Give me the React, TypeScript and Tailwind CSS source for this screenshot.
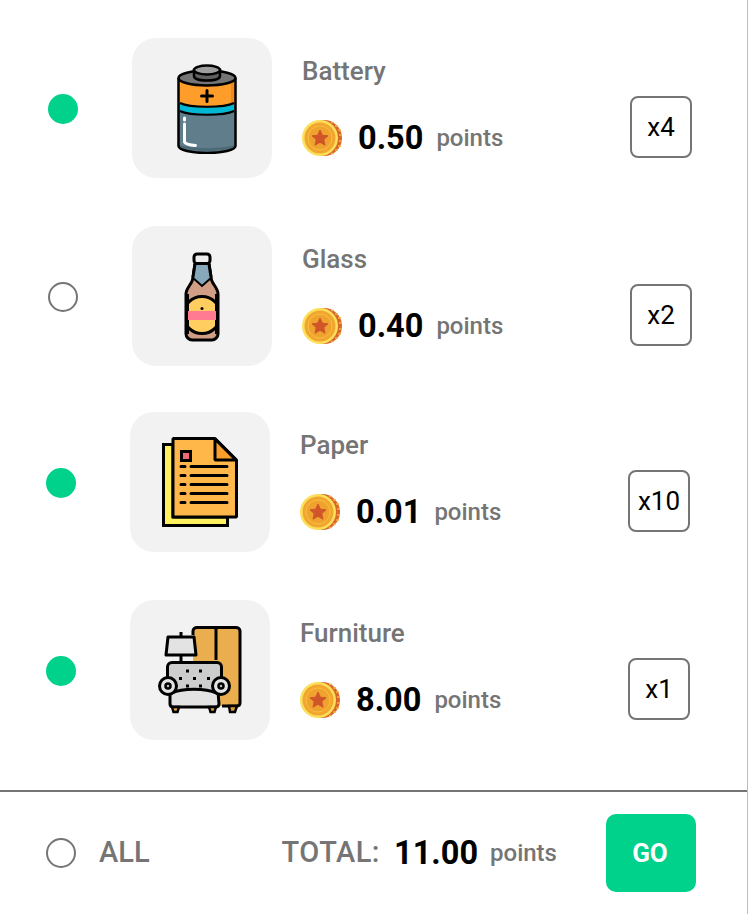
import React from "react";

function Coin() {
  return (
    <svg width="40" height="36" viewBox="0 0 40 36" className="shrink-0">
      <circle cx="22" cy="18" r="18" fill="#d9662c" />
      <path d="M29 2.500l3 0M33 6l3 0M36 10l3 0M37 15l3 0M37 21l3 0M36 26l3 0M33 30l3 0M29 33.500l3 0" stroke="#f5b23a" strokeWidth="1.500" />
      <circle cx="18" cy="18" r="18" fill="#fbe05c" />
      <path d="M18 0a18 18 0 0 1 0 36a18 18 0 0 0 0-36z" fill="#ef9f2c" />
      <circle cx="18" cy="18" r="15.500" fill="#f3a62e" />
      <circle cx="18" cy="18" r="12" fill="#efa22d" stroke="#f6c044" strokeWidth="1" />
      <path d="M18 10l2.400 5.200 5.600.6-4.200 3.800 1.200 5.600-5-2.900-5 2.900 1.200-5.600-4.200-3.800 5.600-.6z" fill="#d0562a" stroke="#d0562a" strokeWidth="1" strokeLinejoin="round" />
    </svg>
  );
}

function Battery() {
  return (
    <svg width="60" height="90" viewBox="0 0 60 90" className="mt-[2px] ml-[10px]">
      <path d="M1.500 14v68c0 4 13 7 28.500 7s28.500-3 28.500-7V14z" fill="#607d8b" />
      <path d="M1.500 14v25c8 4 49 4 57 0V14z" fill="#ff9d2a" />
      <path d="M54 18h4.500v20l-4.500 2z" fill="#f08a1d" />
      <path d="M3 40c10 5 44 5 54 0v6c-10 5-44 5-54 0z" fill="#00b8d4" />
      <path d="M3 84c10 4 44 4 54 0v-3c-10 4-44 4-54 0z" fill="#4f6a77" />
      <ellipse cx="30" cy="14" rx="28.500" ry="7.500" fill="#757575" stroke="#000" strokeWidth="2.500" />
      <path d="M17 6v6c0 6 26 6 26 0V6z" fill="#5f5f5f" stroke="#000" strokeWidth="2.500" />
      <ellipse cx="30" cy="6" rx="13" ry="4.500" fill="#9e9e9e" stroke="#000" strokeWidth="2.500" />
      <path d="M1.500 14v68c0 4 13 7 28.500 7s28.500-3 28.500-7V14" fill="none" stroke="#000" strokeWidth="2.500" />
      <path d="M3 39c10 5 44 5 54 0M3 47c10 5 44 5 54 0" fill="none" stroke="#000" strokeWidth="2" />
      <path d="M30 26.500v11M24.500 32h11" stroke="#000" strokeWidth="3" strokeLinecap="round" />
      <path d="M7.500 54v2M7.500 60v18c1 2 5 3 11 3.500" fill="none" stroke="#fff" strokeWidth="3" strokeLinecap="round" />
    </svg>
  );
}

function Bottle() {
  return (
    <svg width="36" height="90" viewBox="0 0 36 90" className="mt-[2px]">
      <defs>
        <clipPath id="label">
          <rect x="3.500" y="30" width="29" height="58" />
        </clipPath>
      </defs>
      <path d="M11 12l-2 13c0 7-7 10-7 17v40c0 3 3 6 6 6h20c3 0 6-3 6-6V42c0-7-7-10-7-17l-2-13z" fill="#cf9e85" stroke="#000" strokeWidth="3" strokeLinejoin="round" />
      <path d="M12 11h12l3.500 13-9.500 10-9.500-10z" fill="#87a7bb" />
      <path d="M8 25l10 9 10-9" fill="none" stroke="#000" strokeWidth="2" />
      <path d="M11 12l-2 13M25 12l2 13" fill="none" stroke="#000" strokeWidth="3" />
      <rect x="10" y="2" width="16" height="9.500" rx="3" fill="#eee" stroke="#000" strokeWidth="3" />
      <g clipPath="url(#label)">
        <circle cx="18" cy="63" r="18.500" fill="#ffcd60" stroke="#000" strokeWidth="3" />
      </g>
      <path d="M3.500 42v40M32.500 42v40" stroke="#000" strokeWidth="3" />
      <rect x="4" y="59" width="28" height="9" fill="#ff7b92" />
      <circle cx="18" cy="56.500" r="1.500" fill="#000" />
    </svg>
  );
}

function Papers() {
  return (
    <svg width="76" height="90" viewBox="0 0 76 90">
      <path d="M11 7.500H1.500v81h64V80H11z" fill="#fff15f" stroke="#000" strokeWidth="3" />
      <path d="M11 1.500h42l21.500 21.500v57H11z" fill="#ffb74a" stroke="#000" strokeWidth="3" strokeLinejoin="bevel" />
      <path d="M53 2v21h21z" fill="#f99f2c" stroke="#000" strokeWidth="3" strokeLinejoin="bevel" />
      <rect x="19.500" y="14.500" width="9" height="9" fill="#ef6a74" stroke="#000" strokeWidth="3" />
      <path d="M19 29.500h4M29 29.500h36M19 38.500h4M29 38.500h36M19 47.500h4M29 47.500h36M19 56.500h4M29 56.500h36M19 65.500h4M29 65.500h36" stroke="#000" strokeWidth="3" strokeLinecap="round" />
    </svg>
  );
}

function Furniture() {
  return (
    <svg width="84" height="88" viewBox="0 0 84 88">
      <path d="M35 36V5c0-2 2-3.500 4-3.500h39c2 0 4 1.500 4 3.500v72c0 2-2 3-4 3H55V36z" fill="#ebae4f" />
      <path d="M35 9V5c0-2 2-3.500 4-3.500h39c2 0 4 1.500 4 3.500v72c0 2-2 3-4 3H64" fill="none" stroke="#000" strokeWidth="3" />
      <path d="M58 2v32" stroke="#000" strokeWidth="3" />
      <path d="M71 80l1 6h5l2-6z" fill="#e19a32" stroke="#000" strokeWidth="2.500" />
      <path d="M23 6v5M23 29v6" stroke="#000" strokeWidth="3" />
      <path d="M10 11h26l2 18H8z" fill="#e3e3e3" stroke="#000" strokeWidth="3" strokeLinejoin="round" />
      <path d="M9.500 66V41c0-2.500 2-4.500 4.500-4.500h45c2.500 0 4.500 2 4.500 4.500v25z" fill="#cdcdcd" stroke="#000" strokeWidth="3" />
      <path d="M14 67c10-5 34-5 44 0l2-1 1 12c0 2-2 3-4 3H16c-2 0-4-1-4-3V66z" fill="#e3e3e3" stroke="#000" strokeWidth="3" strokeLinejoin="round" />
      <circle cx="10" cy="60" r="8.500" fill="#e3e3e3" stroke="#000" strokeWidth="3" />
      <circle cx="10" cy="60" r="2.500" fill="#bbb" stroke="#000" strokeWidth="2.500" />
      <circle cx="63" cy="60" r="8.500" fill="#e3e3e3" stroke="#000" strokeWidth="3" />
      <circle cx="63" cy="60" r="2.500" fill="#bbb" stroke="#000" strokeWidth="2.500" />
      <path d="M14 81l1.500 5h4l1.500-5zM51 81l1.500 5h4l1.500-5z" fill="#e19a32" stroke="#000" strokeWidth="2.500" />
      <g fill="#000">
        <rect x="28" y="43.500" width="3" height="3" /><rect x="41" y="43.500" width="3" height="3" />
        <rect x="21" y="51" width="3" height="3" /><rect x="35" y="51" width="3" height="3" /><rect x="49" y="51" width="3" height="3" />
        <rect x="28" y="58.500" width="3" height="3" /><rect x="41" y="58.500" width="3" height="3" />
      </g>
    </svg>
  );
}

interface Item {
  name: string;
  value: string;
  qty: string;
  selected: boolean;
  icon: React.ReactNode;
  shifted?: boolean;
}

const items: Item[] = [
  { name: "Battery", value: "0.50", qty: "x4", selected: true, icon: <Battery /> },
  { name: "Glass", value: "0.40", qty: "x2", selected: false, icon: <Bottle /> },
  { name: "Paper", value: "0.01", qty: "x10", selected: true, icon: <Papers />, shifted: true },
  { name: "Furniture", value: "8.00", qty: "x1", selected: true, icon: <Furniture />, shifted: true },
];

function Radio({ on }: { on: boolean }) {
  return on ? (
    <div className="mt-[2px] size-[30px] shrink-0 rounded-full bg-[#00d18b]" />
  ) : (
    <div className="mt-[2px] size-[30px] shrink-0 rounded-full border-2 border-[#757575]" />
  );
}

function Row({ item }: { item: Item }) {
  return (
    <div className={`flex h-[140px] items-center ${item.shifted ? "pl-[46px]" : "pl-[48px]"}`}>
      <Radio on={item.selected} />
      <div className="ml-[54px] flex size-[140px] shrink-0 items-center justify-center rounded-[24px] bg-[#f2f2f2]">
        {item.icon}
      </div>
      <div className="ml-[30px] flex h-full w-[328px] shrink-0 flex-col">
        <div className="mt-[15px] text-[26px] leading-[36px] font-medium text-[#757575]">{item.name}</div>
        <div className="mt-[18px] flex h-[62px] items-center">
          <Coin />
          <span className="ml-[16px] text-[32.5px] font-bold text-black">{item.value}</span>
          <span className="ml-[13px] text-[24px] font-medium text-[#757575]">points</span>
        </div>
      </div>
      <div className="mt-[38px] flex size-[62px] shrink-0 items-center justify-center rounded-[8px] border-2 border-[#757575] text-[26px] text-black">
        {item.qty}
      </div>
    </div>
  );
}

export default function App() {
  return (
    <div className="flex h-[914px] w-[748px] flex-col overflow-hidden border-r border-[#bdbdbd] bg-white font-['Roboto',sans-serif]">
      <div className="flex flex-col pt-[38px]">
        <Row item={items[0]} />
        <div className="mt-[48px]"><Row item={items[1]} /></div>
        <div className="mt-[46px]"><Row item={items[2]} /></div>
        <div className="mt-[48px]"><Row item={items[3]} /></div>
      </div>
      <div className="mt-[50px] flex h-[124px] w-[748px] items-center border-t-2 border-[#757575] pl-[46px]">
        <div className="size-[30px] shrink-0 rounded-full border-2 border-[#757575]" />
        <span className="ml-[23px] text-[29px] font-medium text-[#757575]">ALL</span>
        <span className="ml-[132px] text-[29px] font-medium tracking-[0.5px] text-[#757575]">TOTAL:</span>
        <span className="ml-[14px] text-[32.5px] font-bold text-black">11.00</span>
        <span className="ml-[12px] text-[24px] font-medium text-[#757575]">points</span>
        <button className="ml-[49px] h-[78px] w-[90px] rounded-[10px] bg-[#00d18b] pr-[2px] text-[26px] font-bold text-white">GO</button>
      </div>
    </div>
  );
}
